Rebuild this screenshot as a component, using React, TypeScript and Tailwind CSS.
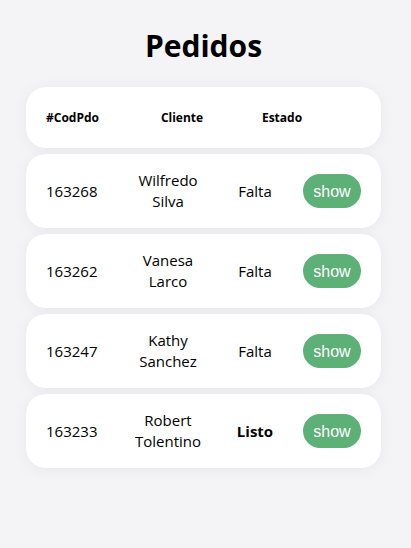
const pedidos = [
  { id: "163268", nombre: "Wilfredo", apellido: "Silva", estado: "Falta" },
  { id: "163262", nombre: "Vanesa", apellido: "Larco", estado: "Falta" },
  { id: "163247", nombre: "Kathy", apellido: "Sanchez", estado: "Falta" },
  { id: "163233", nombre: "Robert", apellido: "Tolentino", estado: "Listo" },
];

export default function App() {
  return (
    <div className="min-h-[548px] w-full bg-[#f4f4f7] pl-[26px] pr-[30px] pt-[26px] pb-10 text-black font-['Open_Sans',sans-serif]">
      <h1 className="text-center text-[30px] font-bold leading-[40px]">Pedidos</h1>

      <div className="mt-[21px] flex flex-col gap-[6px]">
        {/* Encabezado */}
        <div className="flex h-[61px] items-center rounded-[20px] bg-white px-5 text-[12px] font-bold shadow-[0_2px_16px_rgba(0,0,0,0.05)]">
          <span className="w-[90px]">#CodPdo</span>
          <span className="w-[92px] text-center">Cliente</span>
          <span className="w-[108px] text-center">Estado</span>
        </div>

        {pedidos.map((p) => (
          <div
            key={p.id}
            className="flex h-[74px] items-center rounded-[20px] bg-white px-5 text-[15px] leading-[21px] shadow-[0_2px_16px_rgba(0,0,0,0.05)]"
          >
            <span className="w-[60px]">{p.id}</span>
            <span className="w-[124px] text-center">
              {p.nombre}
              <br />
              {p.apellido}
            </span>
            <span className={`w-[50px] text-center ${p.estado === "Listo" ? "font-bold" : ""}`}>
              {p.estado}
            </span>
            <div className="flex flex-1 justify-end">
              <button className="h-[34px] w-[58px] rounded-full bg-[#5db076] text-[16px] text-white font-['Liberation_Sans',sans-serif]">
                show
              </button>
            </div>
          </div>
        ))}
      </div>
    </div>
  );
}
